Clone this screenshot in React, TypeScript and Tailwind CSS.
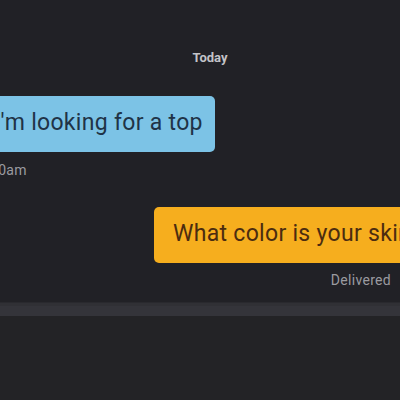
import React from 'react';

const App: React.FC = () => {
  return (
    <div className="w-[400px] h-[400px] overflow-hidden bg-[#212126] flex flex-col font-['Roboto',sans-serif]">
      {/* Messages */}
      <div className="h-[302px] flex flex-col">
        <div className="pt-[48px] text-center text-[13px] font-bold text-[#c3c3c8] pl-[20px]">Today</div>

        {/* Incoming */}
        <div className="mt-[28px] ml-[-24px] flex flex-col items-start">
          <div className="h-[56px] w-[239px] rounded-[5px] bg-[#7cc3e6] flex items-center pl-[18px] text-[23px] tracking-[0.3px] text-[#1f3347] whitespace-nowrap">
            I'm looking for a top
          </div>
          <div className="mt-[8px] pl-[14px] text-[14px] tracking-[0.3px] text-[#9b9ba0]">10am</div>
        </div>

        {/* Outgoing */}
        <div className="mt-[26px] ml-[154px] flex flex-col">
          <div className="h-[56px] w-[280px] rounded-[5px] bg-[#f6ae1e] flex items-center pl-[19px] text-[23px] tracking-[0.3px] text-[#4b2c10] whitespace-nowrap">
            What color is your skin
          </div>
          <div className="mt-[7px] w-[237px] text-right text-[14px] tracking-[0.3px] text-[#9b9ba0]">Delivered</div>
        </div>
      </div>

      {/* Input divider */}
      <div className="h-[1px] bg-[#29292e]" />
      <div className="h-[3px] bg-[#303035]" />
      <div className="h-[10px] bg-[#34343a]" />
      <div className="flex-1 bg-[#232326]" />
    </div>
  );
};

export default App;
